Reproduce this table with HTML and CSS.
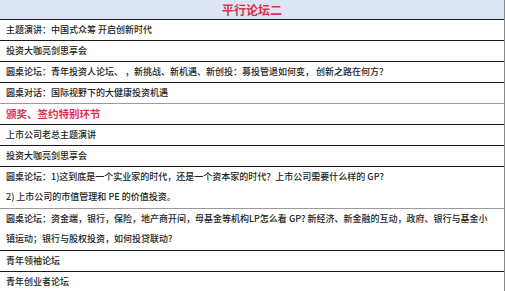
FILE: index.html
```html
<!DOCTYPE html>
<html lang="zh">
<head>
<meta charset="utf-8">
<link rel="stylesheet" href="styles.css">
</head>
<body>
<div class="table">
  <div class="head">平行论坛二</div>
  <div class="row">主题演讲：中国式众筹 开启创新时代</div>
  <div class="row">投资大咖亮剑思享会</div>
  <div class="row">圆桌论坛：青年投资人论坛、 ，新挑战、新机遇、新创投：募投管退如何变， 创新之路在何方？</div>
  <div class="row gray">圆桌对话：国际视野下的大健康投资机遇</div>
  <div class="row red">颁奖、签约特别环节</div>
  <div class="row">上市公司老总主题演讲</div>
  <div class="row">投资大咖亮剑思享会</div>
  <div class="row multi gray">圆桌论坛：1)这到底是一个实业家的时代，还是一个资本家的时代？上市公司需要什么样的 GP?<br>2) 上市公司的市值管理和 PE 的价值投资。</div>
  <div class="row multi">圆桌论坛：资金端，银行，保险，地产商开间，母基金等机构LP怎么看 GP? 新经济、新金融的互动，政府、银行与基金小<br>镇运动；银行与股权投资，如何投贷联动?</div>
  <div class="row">青年领袖论坛</div>
  <div class="row last">青年创业者论坛</div>
</div>
</body>
</html>
```
FILE: styles.css
```css
html, body {
  margin: 0;
  padding: 0;
  background: #ffffff;
}
body {
  font-family: "Noto Sans CJK SC", "Microsoft YaHei", sans-serif;
  color: #222222;
}
.table {
  width: 504px;
  border-right: 1px solid #8a8a8a;
  display: flex;
  flex-direction: column;
}
.head {
  height: 19px;
  line-height: 19px;
  background: #dce6f2;
  color: #d9304f;
  font-size: 12px;
  font-weight: 700;
  text-align: center;
  border-bottom: 1px solid #1a1a1a;
}
.row {
  height: 20px;
  line-height: 20px;
  font-size: 9px;
  font-weight: 500;
  padding-left: 6px;
  border-bottom: 1px solid #1a1a1a;
  white-space: nowrap;
}
.row.gray {
  border-bottom: 1px solid #9a9a9a;
}
.row.multi {
  height: 41px;
}
.row.red {
  color: #e0304f;
  font-size: 10.5px;
  font-weight: 700;
}
.row.last {
  border-bottom: none;
}
```
